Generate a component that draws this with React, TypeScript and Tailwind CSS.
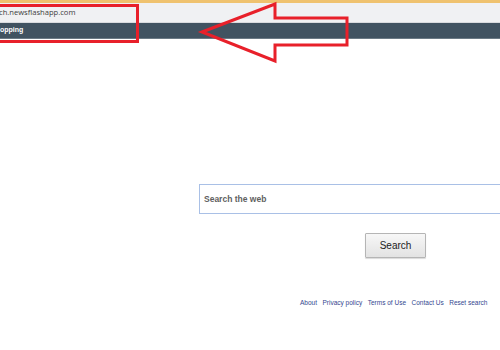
export default function App() {
  const links = ['About', 'Privacy policy', 'Terms of Use', 'Contact Us', 'Reset search'];

  return (
    <div className="relative w-[500px] h-[350px] overflow-hidden bg-white" style={{ fontFamily: '"Liberation Sans", Arial, sans-serif' }}>
      {/* browser chrome */}
      <div className="h-[3px] bg-[#efc26f]" />
      <div className="h-[20px] bg-[#f0f1f3] border-b border-[#d9dbde] flex items-center">
        <span className="text-[7.6px] text-[#3d3d3d] -ml-[1px]" style={{ fontFamily: '"Open Sans", sans-serif' }}>
          ch.newsflashapp.com
        </span>
      </div>
      <div className="h-[16px] bg-[#415361] border-b border-[#6b7a85] flex items-center">
        <span className="text-[7px] font-bold text-white">opping</span>
      </div>

      {/* search */}
      <div className="pl-[199px] pt-[145px]">
        <div className="w-[320px] h-[30px] border border-[#a9c0e6] flex items-center pl-[4px]">
          <span className="text-[8.5px] font-bold text-[#5f5f5f]">Search the web</span>
        </div>
        <div className="pl-[166px] pt-[18px]">
          <button className="w-[61px] h-[25px] border border-[#b5b5b5] rounded-[1px] bg-gradient-to-b from-[#f7f7f7] to-[#e3e3e3] text-[10px] text-[#222] shadow-[0_1px_1px_rgba(0,0,0,0.15)]">
            Search
          </button>
        </div>
      </div>

      {/* footer */}
      <div className="pl-[300px] pt-[40px] flex gap-[5.5px] text-[6.5px] text-[#34478f]">
        {links.map((l) => (
          <span key={l}>{l}</span>
        ))}
      </div>

      {/* annotation overlay */}
      <div className="absolute left-[-5px] top-[4px] w-[144px] h-[39px] border-[3px] border-[#e8202a]" />
      <svg className="absolute left-0 top-0" width="500" height="70" viewBox="0 0 500 70">
        <polygon
          points="202,32 275,4 275,18 347,18 347,45 275,45 275,61"
          fill="none"
          stroke="#e8202a"
          strokeWidth="3"
          strokeLinejoin="miter"
        />
      </svg>
    </div>
  );
}
